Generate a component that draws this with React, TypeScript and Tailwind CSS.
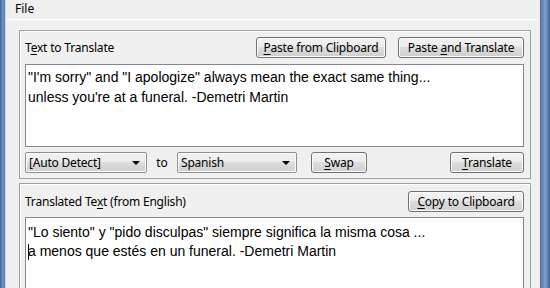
import React from "react";

const ui = "font-['Segoe_UI','Noto_Sans',sans-serif] text-[12px] text-black";

function Btn({ w, children }: { w: string; children: React.ReactNode }) {
  return (
    <button
      type="button"
      className={`${w} ${ui} h-[21px] shrink-0 rounded-[3px] border border-[#707070] bg-[linear-gradient(#f2f2f2_0%,#ebebeb_50%,#dddddd_50%,#cfcfcf_100%)] leading-[19px] tracking-[-0.2px] shadow-[inset_0_0_0_1px_#fcfcfc]`}
    >
      {children}
    </button>
  );
}

function Combo({ w, label }: { w: string; label: string }) {
  return (
    <div
      className={`${w} ${ui} flex h-[21px] shrink-0 items-center rounded-[2px] border border-[#8e8f8f] bg-[linear-gradient(#f2f2f2_0%,#ebebeb_50%,#dddddd_50%,#cfcfcf_100%)] pl-[3px] pr-[6px] tracking-[-0.2px] shadow-[inset_0_0_0_1px_#fcfcfc]`}
    >
      <span className="flex-1">{label}</span>
      <span className="h-0 w-0 border-x-[4px] border-t-[4px] border-x-transparent border-t-black" />
    </div>
  );
}

const u = (c: string) => <span className="underline underline-offset-2">{c}</span>;

export default function App() {
  return (
    <div className="flex h-[288px] w-[550px] overflow-hidden bg-[#f0f0f0]">
      {/* window frame left */}
      <div className="flex w-[6px] shrink-0">
        <div className="w-[5px] bg-[linear-gradient(90deg,#3e5f8f,#6e92c4,#5a7fb3)]" />
        <div className="w-[1px] bg-[#c9d6e6]" />
      </div>

      <div className="flex min-w-0 flex-1 flex-col">
        {/* menu bar */}
        <div className={`${ui} h-[19px] shrink-0 pl-[9px] pt-[1px] leading-[16px]`}>File</div>
        <div className="h-[1px] shrink-0 bg-white" />

        <div className="flex flex-col pl-[13px] pr-[7px] pt-[10px]">
          {/* input panel */}
          <div className="flex flex-col border border-[#a0a0a0] pb-[5px] pl-[5px] pr-[6px] pt-[6px] shadow-[inset_1px_1px_0_#fff]">
            <div className="flex h-[21px] items-center">
              <span className={`${ui} flex-1 tracking-[-0.2px]`}>T{u("e")}xt to Translate</span>
              <Btn w="w-[130px]">{u("P")}aste from Clipboard</Btn>
              <div className="w-[12px]" />
              <Btn w="w-[126px]">Paste {u("a")}nd Translate</Btn>
            </div>
            <div className="mt-[6px] h-[83px] border border-[#828790] bg-white pl-[2px] pt-[2px] font-['Liberation_Sans',Arial,sans-serif] text-[14px] leading-[20px] text-black">
              <div>"I'm sorry" and "I apologize" always mean the exact same thing...</div>
              <div>unless you're at a funeral. -Demetri Martin</div>
            </div>
            <div className="mt-[5px] flex h-[21px] items-center">
              <Combo w="w-[122px]" label="[Auto Detect]" />
              <span className={`${ui} w-[30px] text-center`}>to</span>
              <Combo w="w-[120px]" label="Spanish" />
              <div className="w-[14px]" />
              <Btn w="w-[56px]">{u("S")}wap</Btn>
              <div className="flex-1" />
              <Btn w="w-[74px]">{u("T")}ranslate</Btn>
            </div>
          </div>

          {/* output panel */}
          <div className="mt-[4px] flex flex-col border-l border-t border-r border-[#a0a0a0] pl-[5px] pr-[6px] pt-[7px] shadow-[inset_1px_1px_0_#fff]">
            <div className="flex h-[21px] items-center">
              <span className={`${ui} flex-1 tracking-[-0.2px]`}>Translated Te{u("x")}t (from English)</span>
              <Btn w="w-[116px]">{u("C")}opy to Clipboard</Btn>
            </div>
            <div className="mt-[5px] h-[90px] border border-[#828790] bg-white pl-[2px] pt-[5px] font-['Liberation_Sans',Arial,sans-serif] text-[14px] leading-[19px] text-black">
              <div>"Lo siento" y "pido disculpas" siempre significa la misma cosa ...</div>
              <div className="relative">
                <span className="absolute left-0 top-[2px] h-[16px] w-[1px] bg-black" />
                a menos que estés en un funeral. -Demetri Martin
              </div>
            </div>
          </div>
        </div>
      </div>

      {/* window frame right */}
      <div className="flex w-[12px] shrink-0">
        <div className="w-[2px]" />
        <div className="w-[1px] bg-[#5b6f8a]" />
        <div className="w-[9px] bg-[linear-gradient(90deg,#5a7fb3,#7c9fd0,#3e5f8f)]" />
      </div>
    </div>
  );
}
